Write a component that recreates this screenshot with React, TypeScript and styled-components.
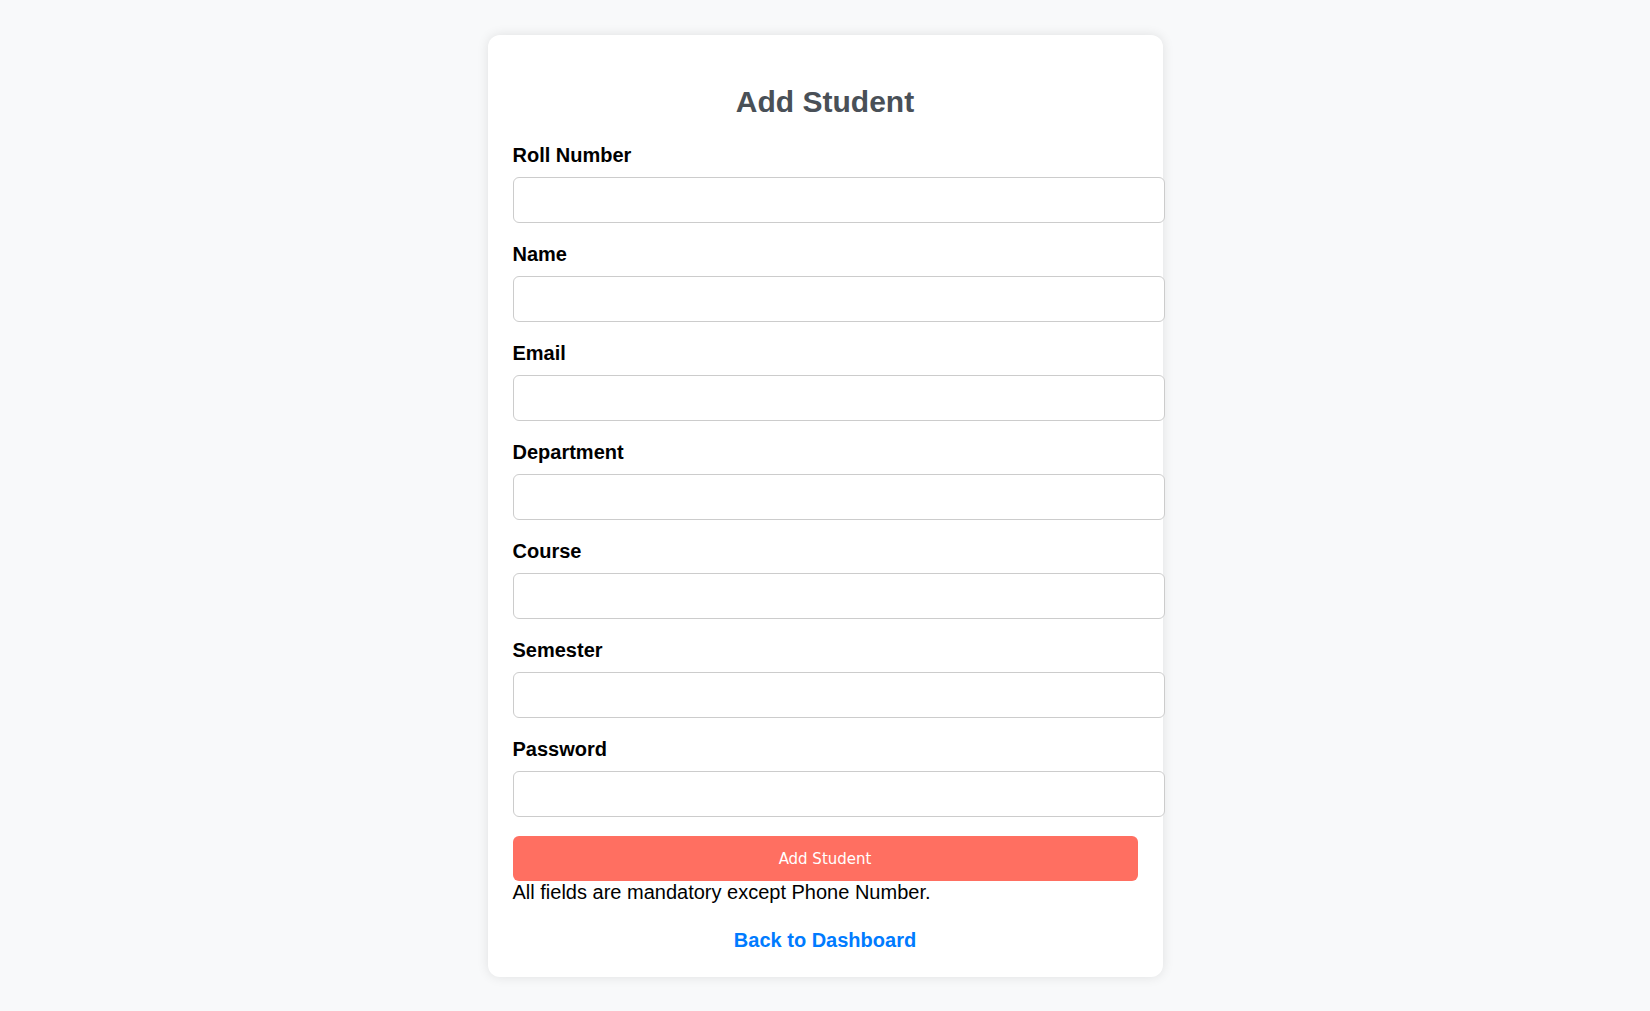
import React, { FC } from "react";
import styled, { createGlobalStyle } from "styled-components";

const GlobalStyle = createGlobalStyle`
    * {
        box-sizing: content-box;
    }
    html, body {
        margin: 0;
        padding: 0;
    }
    body {
        background-color: #f8f9fa;
        font-family: "Liberation Sans", Arial, sans-serif;
        font-size: 20px;
        color: #000;
    }
`;

const Page = styled.div`
    min-height: 100vh;
    display: flex;
    justify-content: center;
    align-items: center;
`;

const Card = styled.div`
    width: 625px;
    padding: 25px;
    background-color: #fff;
    border-radius: 12px;
    box-shadow: 0 0 12px rgba(0, 0, 0, 0.1);
`;

const Title = styled.h2`
    margin: 25px 0 25px;
    font-size: 30px;
    line-height: normal;
    font-weight: bold;
    text-align: center;
    color: #495057;
`;

const Field = styled.div`
    margin-bottom: 20px;

    &:last-of-type {
        margin-bottom: 19px;
    }
`;

const Label = styled.label`
    display: block;
    margin-bottom: 10px;
    font-size: 20px;
    line-height: 23px;
    font-weight: bold;
`;

const Input = styled.input`
    display: block;
    width: 100%;
    height: 19px;
    padding: 12.5px;
    margin: 0;
    border: 1px solid #ccc;
    border-radius: 6px;
    background: #fff;
    font-size: 16.67px;
    font-family: "Liberation Sans", Arial, sans-serif;
    outline: none;
`;

const SubmitButton = styled.button`
    display: block;
    width: 100%;
    height: 45px;
    padding: 0;
    margin: 0;
    border: none;
    border-radius: 6px;
    background-color: #ff6f61;
    color: #fff;
    font-family: "DejaVu Sans Condensed", "DejaVu Sans", sans-serif;
    font-stretch: condensed;
    font-size: 16.67px;
    cursor: pointer;
`;

const Note = styled.p`
    margin: 0;
    line-height: 23px;
`;

const BackRow = styled.p`
    margin: 25px 0 0;
    line-height: 23px;
    text-align: center;
`;

const BackLink = styled.a`
    color: #007bff;
    font-weight: bold;
    text-decoration: none;
`;

const fields = [
    { id: "roll", label: "Roll Number", type: "text" },
    { id: "name", label: "Name", type: "text" },
    { id: "email", label: "Email", type: "email" },
    { id: "department", label: "Department", type: "text" },
    { id: "course", label: "Course", type: "text" },
    { id: "semester", label: "Semester", type: "text" },
    { id: "password", label: "Password", type: "password" },
];

const App: FC = () => {
    return (
        <>
            <GlobalStyle />
            <Page>
                <Card>
                    <Title>Add Student</Title>
                    <form onSubmit={e => e.preventDefault()}>
                        {fields.map(f => (
                            <Field key={f.id}>
                                <Label htmlFor={f.id}>{f.label}</Label>
                                <Input id={f.id} type={f.type} />
                            </Field>
                        ))}
                        <SubmitButton type="submit">Add Student</SubmitButton>
                    </form>
                    <Note>All fields are mandatory except Phone Number.</Note>
                    <BackRow>
                        <BackLink href="#">Back to Dashboard</BackLink>
                    </BackRow>
                </Card>
            </Page>
        </>
    );
};

export default App;
